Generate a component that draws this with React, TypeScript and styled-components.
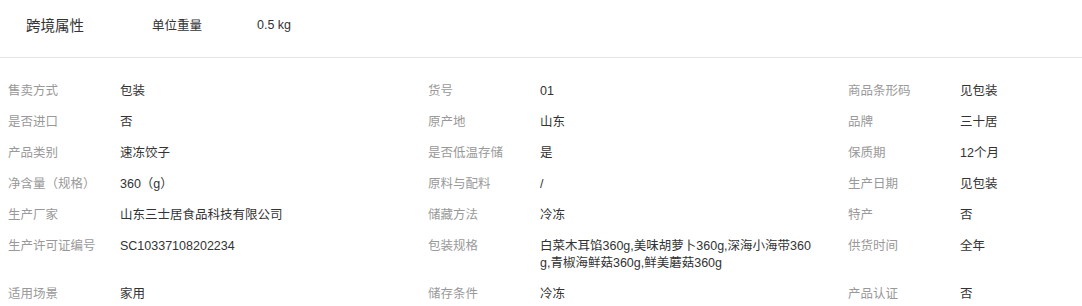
import React from 'react'
import styled, { createGlobalStyle } from 'styled-components'

const GlobalStyle = createGlobalStyle`
  body {
    margin: 0;
    background: #fff;
    font-family: "Liberation Sans", "Noto Sans CJK SC", sans-serif;
  }
`

const STPage = styled.div`
  width: 1082px;
  height: 306px;
  overflow: hidden;
  background: #fff;
`

const STHeader = styled.div`
  display: flex;
  align-items: center;
  height: 49px;
  padding: 0 0 8px 26px;
  border-bottom: 1px solid #e6e6e6;
`

const STHeaderTitle = styled.div`
  width: 126px;
  font-size: 14.5px;
  color: #333;
`

const STHeaderLabel = styled.div`
  width: 105px;
  font-size: 12.5px;
  color: #333;
`

const STHeaderValue = styled.div`
  font-size: 12.5px;
  color: #333;
`

const STGrid = styled.div`
  display: grid;
  grid-template-columns: repeat(3, 420px);
  padding: 18px 0 0 8px;
`

const STCell = styled.div`
  display: flex;
  align-items: flex-start;
  padding: 7px 0;
  font-size: 12.5px;
  line-height: 17px;
`

const STLabel = styled.div`
  flex: 0 0 112px;
  color: #999;
`

const STValue = styled.div`
  width: 278px;
  color: #333;
  word-break: break-all;
`

type TAttr = [string, string]

const attrs : TAttr[] = [
  ['售卖方式', '包装'],
  ['货号', '01'],
  ['商品条形码', '见包装'],
  ['是否进口', '否'],
  ['原产地', '山东'],
  ['品牌', '三十居'],
  ['产品类别', '速冻饺子'],
  ['是否低温存储', '是'],
  ['保质期', '12个月'],
  ['净含量（规格）', '360（g）'],
  ['原料与配料', '/'],
  ['生产日期', '见包装'],
  ['生产厂家', '山东三士居食品科技有限公司'],
  ['储藏方法', '冷冻'],
  ['特产', '否'],
  ['生产许可证编号', 'SC10337108202234'],
  ['包装规格', '白菜木耳馅360g,美味胡萝卜360g,深海小海带360g,青椒海鲜菇360g,鲜美蘑菇360g'],
  ['供货时间', '全年'],
  ['适用场景', '家用'],
  ['储存条件', '冷冻'],
  ['产品认证', '否'],
]

export default function App() : JSX.Element {
  return <STPage>
    <GlobalStyle />
    <STHeader>
      <STHeaderTitle>跨境属性</STHeaderTitle>
      <STHeaderLabel>单位重量</STHeaderLabel>
      <STHeaderValue>0.5 kg</STHeaderValue>
    </STHeader>
    <STGrid>
      { attrs.map(([label, val]) =>
        <STCell key={ label }>
          <STLabel>{ label }</STLabel>
          <STValue>{ val }</STValue>
        </STCell>
      ) }
    </STGrid>
  </STPage>
}
